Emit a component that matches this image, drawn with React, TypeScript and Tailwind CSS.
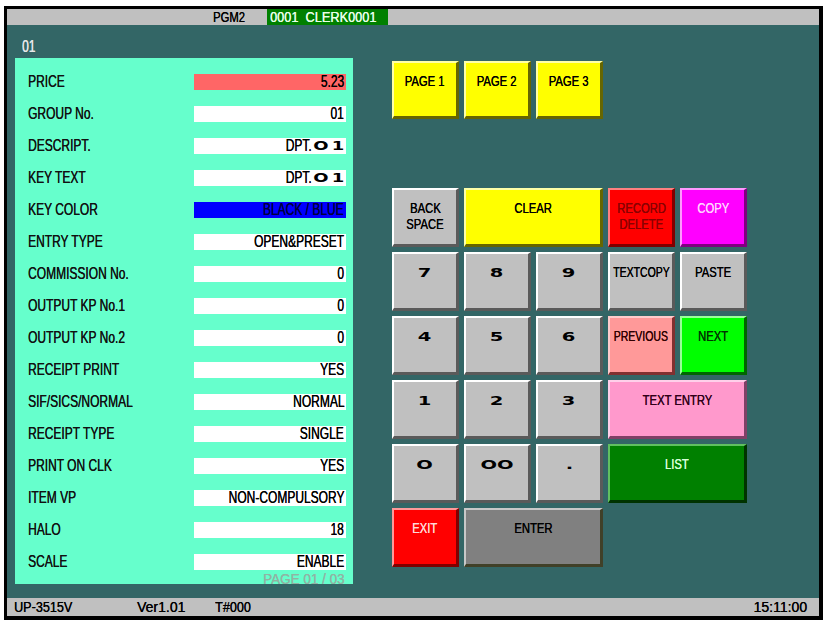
import * as React from "react";

const FONT = "font-['Liberation_Sans','Arial',sans-serif] [text-shadow:0.2px_0_0_currentColor]";
const WIDE = "font-['DejaVu_Sans',sans-serif] font-bold [text-shadow:none]";

/** Condensed text: the terminal's bitmap font is much narrower than Arial */
function N({
  children,
  o = "origin-left",
  s = "scale-x-75",
}: {
  children: React.ReactNode;
  o?: string;
  s?: string;
}): React.ReactElement {
  return <span className={`inline-block whitespace-nowrap ${o} ${s}`}>{children}</span>;
}

/** Wide bitmap-like digits */
function Wide({ children, className = "text-[13px]" }: { children: React.ReactNode; className?: string }): React.ReactElement {
  return <span className={`inline-block scale-x-150 whitespace-nowrap ${WIDE} ${className}`}>{children}</span>;
}

function Dpt(): React.ReactElement {
  return (
    <>
      <N o="origin-right">DPT.</N>
      <Wide className="ml-[8px] mr-[2px] text-[12px] leading-[12px] tracking-[2px]">O1</Wide>
    </>
  );
}

interface FieldRow {
  label: string;
  value: React.ReactNode;
  box?: string;
}

const ROWS: FieldRow[] = [
  { label: "PRICE", value: "5.23", box: "bg-[#ff6666] text-black" },
  { label: "GROUP No.", value: "01" },
  { label: "DESCRIPT.", value: <Dpt /> },
  { label: "KEY TEXT", value: <Dpt /> },
  { label: "KEY COLOR", value: "BLACK / BLUE", box: "bg-[#0000ff] text-[#00003a]" },
  { label: "ENTRY TYPE", value: "OPEN&PRESET" },
  { label: "COMMISSION No.", value: "0" },
  { label: "OUTPUT KP No.1", value: "0" },
  { label: "OUTPUT KP No.2", value: "0" },
  { label: "RECEIPT PRINT", value: "YES" },
  { label: "SIF/SICS/NORMAL", value: "NORMAL" },
  { label: "RECEIPT TYPE", value: "SINGLE" },
  { label: "PRINT ON CLK", value: "YES" },
  { label: "ITEM VP", value: "NON-COMPULSORY" },
  { label: "HALO", value: "18" },
  { label: "SCALE", value: "ENABLE" },
];

type Tone = "gray" | "yellow" | "red" | "magenta" | "salmon" | "lime" | "pink" | "green" | "exit" | "dark";

const TONES: Record<Tone, string> = {
  gray: "bg-[#c0c0c0] border-t-white border-l-white border-b-[#5a5a5a] border-r-[#5a5a5a] text-black",
  yellow: "bg-[#ffff00] border-t-[#ffffa8] border-l-[#ffffa8] border-b-[#666600] border-r-[#666600] text-black",
  red: "bg-[#ff0000] border-t-[#ff8080] border-l-[#ff8080] border-b-[#800000] border-r-[#800000] text-[#8a0000]",
  magenta: "bg-[#ff00ff] border-t-[#ff99ff] border-l-[#ff99ff] border-b-[#800080] border-r-[#800080] text-[#ffd0ff]",
  salmon: "bg-[#ff9999] border-t-[#ffcccc] border-l-[#ffcccc] border-b-[#803030] border-r-[#803030] text-[#300000]",
  lime: "bg-[#00ff00] border-t-[#99ff99] border-l-[#99ff99] border-b-[#006600] border-r-[#006600] text-[#003300]",
  pink: "bg-[#ff99cc] border-t-[#ffd0ea] border-l-[#ffd0ea] border-b-[#804066] border-r-[#804066] text-[#300018]",
  green: "bg-[#008000] border-t-[#60c060] border-l-[#60c060] border-b-[#003300] border-r-[#003300] text-[#d8ffd8]",
  exit: "bg-[#ff0000] border-t-[#ff9999] border-l-[#ff9999] border-b-[#800000] border-r-[#800000] text-[#ffd8d8]",
  dark: "bg-[#808080] border-t-[#c8c8c8] border-l-[#c8c8c8] border-b-[#404028] border-r-[#404028] text-black",
};

function Key({
  tone,
  children,
  className = "",
}: {
  tone: Tone;
  children: React.ReactNode;
  className?: string;
}): React.ReactElement {
  const content = typeof children === "string" ? <N o="origin-center">{children}</N> : children;
  return (
    <div
      className={`flex flex-col items-center border-t-2 border-l-2 border-b-[3px] border-r-[3px] pt-[10px] text-[15px] leading-[15px] ${TONES[tone]} ${className}`}
    >
      {content}
    </div>
  );
}

function Digit({ children }: { children: React.ReactNode }): React.ReactElement {
  return (
    <Key tone="gray">
      <Wide className="pt-[2px] text-[13px] leading-[14px]">{children}</Wide>
    </Key>
  );
}

export default function App(): React.ReactElement {
  return (
    <div className={`h-[620px] w-[823px] overflow-hidden bg-white pl-[4px] pt-[6px] ${FONT}`}>
      <div className="flex h-[614px] w-[819px] flex-col border-t-[3px] border-l-[3px] border-r-[4px] border-b-[4px] border-black">
        {/* Header */}
        <div className="flex h-[16px] shrink-0 items-center bg-[#c0c0c0] pl-[206px] text-[15px] leading-[16px]">
          <span className="w-[54px] text-black">
            <N>PGM2</N>
          </span>
          <span className="h-full w-[121px] bg-[#008000] px-[3px] text-[#eaffea]">
            <N s="scale-x-85">0001&nbsp; CLERK0001</N>
          </span>
        </div>

        {/* Main */}
        <div className="flex min-h-0 flex-1 bg-[#336666]">
          {/* Left column */}
          <div className="ml-[8px] flex w-[338px] flex-col">
            <div className="pl-[7px] pt-[11px] text-[16px] leading-[22px] text-[#e8e8e8]">
              <N>01</N>
            </div>
            <div className="flex h-[526px] flex-col bg-[#66ffcc] pl-[13px] pr-[7px] pt-[16px]">
              <div className="flex flex-col gap-[16px]">
                {ROWS.map((row) => (
                  <div key={row.label} className="flex h-[16px] items-center text-[16px] leading-[16px]">
                    <span className="w-[166px] shrink-0 text-[#111]">
                      <N>{row.label}</N>
                    </span>
                    <span
                      className={`flex h-[16px] w-[152px] min-w-0 shrink-0 items-center justify-end whitespace-nowrap pr-[2px] ${
                        row.box ?? "bg-white text-black"
                      }`}
                    >
                      {typeof row.value === "string" ? <N o="origin-right">{row.value}</N> : row.value}
                    </span>
                  </div>
                ))}
              </div>
              <div className="pr-[1px] pt-[3px] text-right text-[15px] leading-[12px] text-[#90b4a4]">
                <N o="origin-right" s="scale-x-90">PAGE 01 / 03</N>
              </div>
            </div>
          </div>

          {/* Right column */}
          <div className="ml-[39px] flex flex-col pt-[36px]">
            <div className="grid grid-cols-[repeat(3,67px)] gap-[5px]">
              <Key tone="yellow" className="h-[58px]">PAGE 1</Key>
              <Key tone="yellow" className="h-[58px]">PAGE 2</Key>
              <Key tone="yellow" className="h-[58px]">PAGE 3</Key>
            </div>

            <div className="mt-[69px] grid grid-cols-[repeat(5,67px)] grid-rows-[repeat(6,59px)] gap-[5px]">
              <Key tone="gray" className="leading-[16px]">
                <N o="origin-center">BACK</N>
                <N o="origin-center">SPACE</N>
              </Key>
              <Key tone="yellow" className="col-span-2">CLEAR</Key>
              <Key tone="red" className="leading-[16px]">
                <N o="origin-center">RECORD</N>
                <N o="origin-center">DELETE</N>
              </Key>
              <Key tone="magenta">COPY</Key>

              <Digit>7</Digit>
              <Digit>8</Digit>
              <Digit>9</Digit>
              <Key tone="gray">
                <N o="origin-center" s="scale-x-70">TEXTCOPY</N>
              </Key>
              <Key tone="gray">PASTE</Key>

              <Digit>4</Digit>
              <Digit>5</Digit>
              <Digit>6</Digit>
              <Key tone="salmon">
                <N o="origin-center" s="scale-x-70">PREVIOUS</N>
              </Key>
              <Key tone="lime">NEXT</Key>

              <Digit>1</Digit>
              <Digit>2</Digit>
              <Digit>3</Digit>
              <Key tone="pink" className="col-span-2">TEXT ENTRY</Key>

              <Digit>O</Digit>
              <Digit>OO</Digit>
              <Digit>.</Digit>
              <Key tone="green" className="col-span-2">LIST</Key>

              <Key tone="exit">EXIT</Key>
              <Key tone="dark" className="col-span-2">ENTER</Key>
            </div>
          </div>
        </div>

        {/* Footer */}
        <div className="flex h-[18px] shrink-0 items-center bg-[#c0c0c0] pl-[7px] pr-[12px] text-[14px] leading-[18px] text-black">
          <span className="w-[123px]">
            <N s="scale-x-90">UP-3515V</N>
          </span>
          <span className="w-[78px]">Ver1.01</span>
          <span>
            <N s="scale-x-90">T#000</N>
          </span>
          <span className="ml-auto">15:11:00</span>
        </div>
      </div>
    </div>
  );
}
